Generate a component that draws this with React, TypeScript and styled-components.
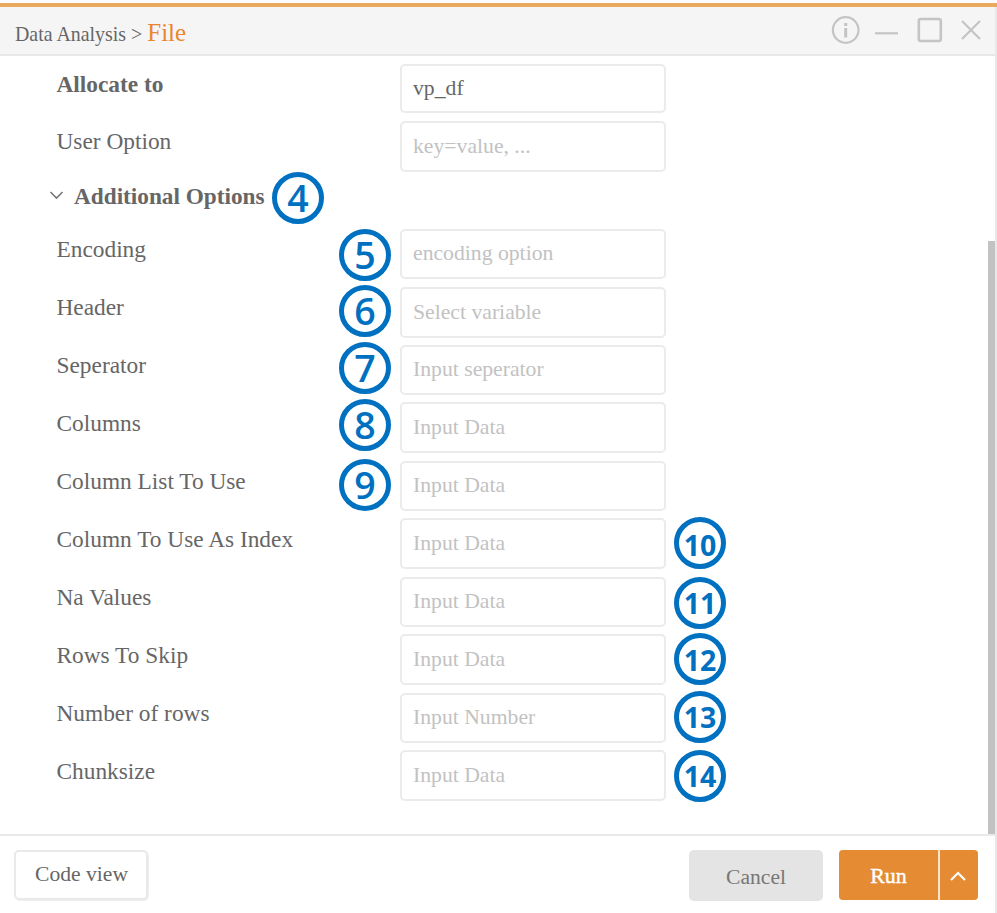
import React from 'react';
import styled, { createGlobalStyle } from 'styled-components';

const GlobalStyle = createGlobalStyle`
  *, *::before, *::after { box-sizing: border-box; }
  html, body { margin: 0; padding: 0; background: #fff; }
  body { overflow: hidden; }
`;

const Window = styled.div`
  width: 997px;
  height: 913px;
  display: flex;
  flex-direction: column;
  padding-top: 3px;
  background: #fbfbfb;
  color: #666;
  font-family: 'Liberation Serif', 'Times New Roman', serif;
`;

const Frame = styled.div`
  flex: 1;
  min-height: 0;
  display: flex;
  flex-direction: column;
  border-top: 4px solid #eaa95d;
  background: #fff;
`;

const TitleBar = styled.header`
  height: 49px;
  flex: none;
  display: flex;
  align-items: center;
  justify-content: space-between;
  padding: 0 13px 0 15px;
  background: #f5f5f5;
  border-bottom: 2px solid #e8e8e8;
  border-right: 2px solid #e8e8e8;
`;

const Breadcrumb = styled.div`
  display: flex;
  align-items: baseline;
  gap: 5px;
  padding-top: 5px;
  font-size: 19.9px;
  line-height: 28px;
  white-space: nowrap;
`;

const Current = styled.span`
  font-size: 25px;
  color: #e8872f;
`;

const WindowIcons = styled.svg`
  width: 152px;
  height: 32px;
  flex: none;
  fill: none;
  margin-top: -1px;
  stroke: #c4c4c4;
`;

const Body = styled.main`
  height: 778px;
  flex: none;
  display: flex;
  border-right: 2px solid #e8e8e8;
`;

const Form = styled.div`
  flex: 1;
  padding: 8px 0 0 56px;
`;

const Row = styled.div<{ $height: number }>`
  position: relative;
  display: grid;
  grid-template-columns: 344px 267px;
  align-items: start;
  height: ${(p) => p.$height}px;
`;

const Label = styled.label<{ $bold?: boolean; $low?: boolean }>`
  padding: ${(p) => (p.$low ? 7 : 6)}px 0 0 0.5px;
  font-size: 23.35px;
  line-height: 28px;
  font-weight: ${(p) => (p.$bold ? 700 : 400)};
  white-space: nowrap;
`;

const Field = styled.input<{ $height: number }>`
  width: 266px;
  height: ${(p) => p.$height}px;
  padding: 0 11px ${(p) => (p.$height === 50 ? 2 : 0)}px;
  border: 2px solid #ebebeb;
  border-radius: 5px;
  outline: none;
  background: #fff;
  color: #666;
  font: 21.7px 'Liberation Serif', 'Times New Roman', serif;
  &::placeholder { color: #c2c2c2; opacity: 1; }
`;

const Section = styled.div`
  position: relative;
  display: flex;
  align-items: flex-start;
  gap: 10px;
  height: 46px;
  margin-left: -7px;
`;

const SectionTitle = styled.h2`
  margin: -1px 0 0;
  font-size: 23.25px;
  line-height: 28px;
  font-weight: 700;
  white-space: nowrap;
`;

const Chevron = styled.svg`
  width: 15px;
  height: 15px;
  margin-top: 7px;
  fill: none;
  stroke: #777;
  stroke-width: 1.6;
`;

/* Numbered callout laid over the form. */
const Badge = styled.span<{ $left: number; $top: number; $wide: boolean; $drop?: number }>`
  position: absolute;
  left: ${(p) => p.$left}px;
  top: ${(p) => p.$top}px;
  width: 52px;
  height: 52px;
  display: flex;
  align-items: center;
  justify-content: center;
  border: 5px solid #0070c0;
  border-radius: 50%;
  background: #fff;
  color: #0070c0;
  font-family: 'Open Sans', 'Noto Sans', sans-serif;
  font-weight: ${(p) => (p.$wide ? 700 : 600)};
  font-size: ${(p) => (p.$wide ? 28.5 : 37.5)}px;
  line-height: 40px;
  padding-top: ${(p) => p.$drop ?? 0}px;
`;

const ScrollTrack = styled.div`
  width: 7px;
  padding-top: 185px;
`;

const ScrollThumb = styled.div`
  height: 593px;
  background: #c2c2c2;
`;

const Footer = styled.footer`
  flex: 1;
  display: flex;
  align-items: flex-start;
  padding: 14px 17px 0 14px;
  border-top: 2px solid #e9e9e9;
  border-right: 2px solid #e8e8e8;
`;

const Button = styled.button<{ $muted?: boolean }>`
  width: 134px;
  height: ${(p) => (p.$muted ? '51px' : '50px')};
  margin-left: ${(p) => (p.$muted ? 'auto' : '0')};
  margin-right: ${(p) => (p.$muted ? '16px' : '0')};
  padding: ${(p) => (p.$muted ? '3px 0 0' : '0 0 1px 1px')};
  border: ${(p) => (p.$muted ? '0' : '2px solid #e9e9e9')};
  border-radius: 5px;
  background: ${(p) => (p.$muted ? '#e4e4e4' : '#fff')};
  box-shadow: ${(p) => (p.$muted ? 'none' : '1px 1px 1px #eeeeee')};
  color: ${(p) => (p.$muted ? '#777' : '#666')};
  font: 21.6px 'Liberation Serif', 'Times New Roman', serif;
`;

const RunGroup = styled.div`
  display: flex;
  gap: 2px;
  height: 50px;
  border-radius: 4px;
  overflow: hidden;
  background: #fbe5cf;
`;

const RunButton = styled.button<{ $width: number }>`
  width: ${(p) => p.$width}px;
  padding: 1px 0 0;
  display: flex;
  align-items: center;
  justify-content: center;
  border: 0;
  background: #e58b33;
  color: #fff;
  font: 22px 'Liberation Serif', 'Times New Roman', serif;
  -webkit-text-stroke: 0.4px #fff;
`;

const UpArrow = styled.svg`
  width: 18px;
  height: 14px;
  margin-right: 2px;
  fill: none;
  stroke: #fff;
  stroke-width: 2.2;
`;

type RowData = {
  label: string;
  height: number;
  field: number;
  low?: boolean;
  placeholder?: string;
  value?: string;
  bold?: boolean;
  badge?: { n: number; left: number; top: number; drop?: number };
};

const basicRows: RowData[] = [
  { label: 'Allocate to', height: 57, field: 49, value: 'vp_df', bold: true },
  { label: 'User Option', height: 62, field: 51, placeholder: 'key=value, ...' },
];

const optionRows: RowData[] = [
  { label: 'Encoding', height: 58, field: 50, placeholder: 'encoding option', badge: { n: 5, left: 283, top: 0 } },
  { label: 'Header', height: 58, field: 51, placeholder: 'Select variable', badge: { n: 6, left: 283, top: -2 } },
  { label: 'Seperator', height: 57, field: 50, placeholder: 'Input seperator', badge: { n: 7, left: 283, top: -3 } },
  { label: 'Columns', height: 59, field: 51, low: true, placeholder: 'Input Data', badge: { n: 8, left: 283, top: -3 } },
  { label: 'Column List To Use', height: 57, field: 50, placeholder: 'Input Data', badge: { n: 9, left: 283, top: -2 } },
  { label: 'Column To Use As Index', height: 59, field: 51, low: true, placeholder: 'Input Data', badge: { n: 10, left: 618, top: -1, drop: 3 } },
  { label: 'Na Values', height: 57, field: 50, placeholder: 'Input Data', badge: { n: 11, left: 618, top: 0, drop: 0 } },
  { label: 'Rows To Skip', height: 59, field: 51, low: true, placeholder: 'Input Data', badge: { n: 12, left: 618, top: -1, drop: 2 } },
  { label: 'Number of rows', height: 57, field: 50, placeholder: 'Input Number', badge: { n: 13, left: 618, top: -2, drop: 0 } },
  { label: 'Chunksize', height: 58, field: 51, low: true, placeholder: 'Input Data', badge: { n: 14, left: 618, top: 0, drop: 0 } },
];

const OptionRow = ({ row }: { row: RowData }) => (
  <Row $height={row.height}>
    <Label $bold={row.bold} $low={row.low}>{row.label}</Label>
    <Field $height={row.field} placeholder={row.placeholder} defaultValue={row.value} spellCheck={false} />
    {row.badge && (
      <Badge $left={row.badge.left} $top={row.badge.top} $wide={row.badge.n > 9} $drop={row.badge.drop}>
        {row.badge.n}
      </Badge>
    )}
  </Row>
);

export default function App() {
  return (
    <>
      <GlobalStyle />
      <Window>
        <Frame>
          <TitleBar>
            <Breadcrumb>
              <span>Data Analysis &gt;</span>
              <Current>File</Current>
            </Breadcrumb>
            <WindowIcons viewBox="830 14 152 32">
              <circle cx="845.7" cy="30" r="12.8" strokeWidth="2.2" />
              <path d="M845.7 23v3M845.7 28v9.5" strokeWidth="3" />
              <path d="M875 33.3h23" strokeWidth="2.2" />
              <rect x="918.8" y="19" width="22" height="22" rx="2" strokeWidth="2.6" />
              <path d="M962 21l18 18M980 21l-18 18" strokeWidth="2.2" />
            </WindowIcons>
          </TitleBar>
          <Body>
            <Form>
              {basicRows.map((row) => (
                <OptionRow key={row.label} row={row} />
              ))}
              <Section>
                <Chevron viewBox="0 0 15 15">
                  <path d="M1.5 2l6 6 6-6" />
                </Chevron>
                <SectionTitle>Additional Options</SectionTitle>
                <Badge $left={223} $top={-11} $wide={false}>4</Badge>
              </Section>
              {optionRows.map((row) => (
                <OptionRow key={row.label} row={row} />
              ))}
            </Form>
            <ScrollTrack>
              <ScrollThumb />
            </ScrollTrack>
          </Body>
          <Footer>
            <Button>Code view</Button>
            <Button $muted>Cancel</Button>
            <RunGroup>
              <RunButton $width={99}>Run</RunButton>
              <RunButton $width={38} aria-label="More run options">
                <UpArrow viewBox="0 0 18 14">
                  <path d="M2 11l7-7 7 7" />
                </UpArrow>
              </RunButton>
            </RunGroup>
          </Footer>
        </Frame>
      </Window>
    </>
  );
}
